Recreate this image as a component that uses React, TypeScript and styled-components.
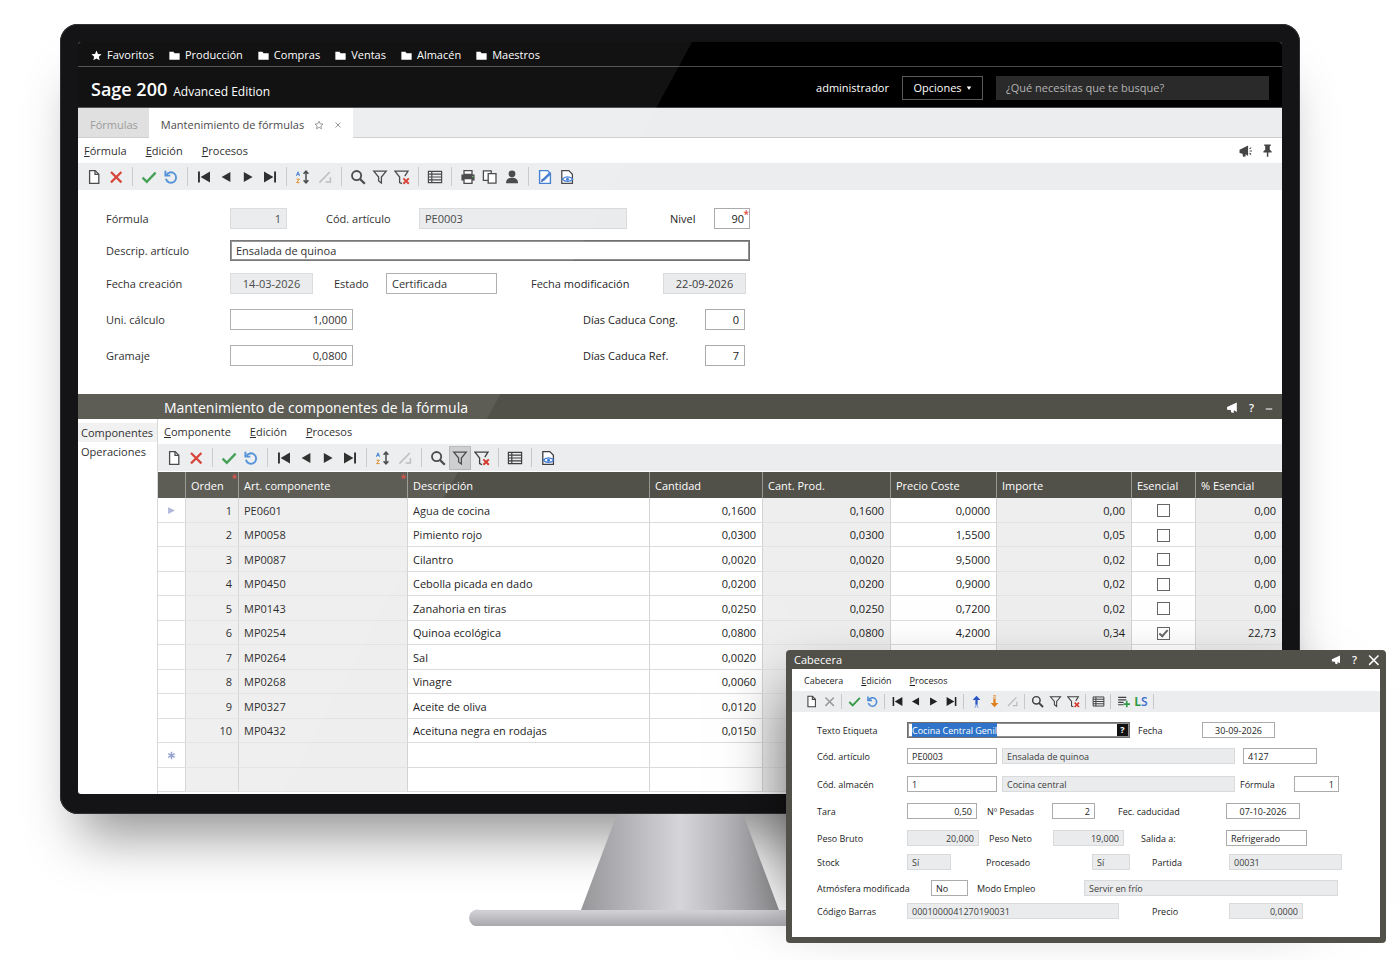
import React, { useEffect, useId, useRef } from "react";
import styled, { createGlobalStyle, css } from "styled-components";

const GlobalStyle = createGlobalStyle`
  *, *::before, *::after { box-sizing: border-box; }
  body {
    margin: 0;
    background: #fff;
    color: #1c1c1c;
    font-family: "Open Sans", "Noto Sans", sans-serif;
    font-size: 11px;
    line-height: 16px;
  }
  button, input {
    font: inherit;
    color: inherit;
  }
  button {
    padding: 0;
    border: 0;
    background: none;
    cursor: pointer;
  }
`;

/* ---------- icons ---------- */

const ink = "#3f3f41";
const red = "#d5382c";
const blue = "#3a78d0";

const funnel = "M1.8 2.2h12.4L9.4 8v6L6.6 12V8z";

const glyphs: Record<string, React.ReactNode> = {
  doc: (
    <g fill="#fff" stroke={ink} strokeWidth="1.3">
      <path d="M3.6 1.6h5.6l3.6 3.6v9.2H3.6z" />
      <path d="M9 1.6v3.8h3.8" fill="none" />
    </g>
  ),
  cross: <path d="M3 3l10.4 10.4M13.4 3L3 13.4" stroke={red} strokeWidth="2.2" fill="none" />,
  crossOff: <path d="M3 3l10.4 10.4M13.4 3L3 13.4" stroke="#9a9a9a" strokeWidth="1.9" fill="none" />,
  check: <path d="M1.6 8.6l4.2 4.2L14.6 3.6" stroke="#379a4a" strokeWidth="2.3" fill="none" />,
  undo: (
    <g fill="none" stroke="#4a8bd6" strokeWidth="1.9">
      <path d="M3.2 6.4a5.2 5.2 0 1 1-.3 3.4" />
      <path d="M2.4 1.8v4.8h4.9" />
    </g>
  ),
  first: <path d="M2 2.4h1.9v11.2H2zM14 2.6v10.8L4.6 8z" fill="#222" />,
  prev: <path d="M12.4 3v10L3.6 8z" fill="#222" />,
  next: <path d="M3.8 3v10l8.8-5z" fill="#222" />,
  last: <path d="M14 2.4h-1.9v11.2H14zM2 2.6v10.8L11.4 8z" fill="#222" />,
  sort: (
    <g>
      <path d="M1.4 6.8L3 2.8l1.6 4M2 5.6h2" fill="none" stroke={blue} strokeWidth="1" />
      <path d="M1.6 10.2h2.8l-2.8 3.4h3" fill="none" stroke="#e0861e" strokeWidth="1" />
      <path d="M11 3v10M8.6 4.8L11 2.2l2.4 2.6M8.6 11.2l2.4 2.6 2.4-2.6" fill="none" stroke={ink} strokeWidth="1.5" />
    </g>
  ),
  slope: <path d="M2.4 13.6L12.8 3M8.6 13h4.8V8.2" fill="none" stroke="#b9babb" strokeWidth="1.5" />,
  up: (
    <g>
      <path d="M8 .8l4.8 5.4H9.4V12H6.6V6.2H3.2z" fill="#2d55c4" />
      <path d="M6 15.8l2-4 2 4" fill="none" stroke="#6f93e0" strokeWidth="1.1" />
    </g>
  ),
  down: (
    <g>
      <path d="M8 15l4.8-5.2H9.4V5H6.6v4.8H3.2z" fill="#de7f1b" />
      <path d="M6.2.8h3.6l-3.6 3h3.8" fill="none" stroke="#e59b4a" strokeWidth="1.1" />
    </g>
  ),
  search: (
    <g fill="none" stroke={ink}>
      <circle cx="6.6" cy="6.6" r="4.6" strokeWidth="1.8" />
      <path d="M10 10l4.8 4.8" strokeWidth="2.3" />
    </g>
  ),
  filter: <path d={funnel} fill="none" stroke={ink} strokeWidth="1.3" />,
  filterOff: (
    <g fill="none">
      <path d="M10.8 7.2L14 2.2H.9L5.6 8v5.6l2.4 1" stroke={ink} strokeWidth="1.3" />
      <path d="M9.4 9.4l5.4 5.4M14.8 9.4l-5.4 5.4" stroke={red} strokeWidth="2" />
    </g>
  ),
  table: (
    <g fill="none" stroke={ink} strokeWidth="1.2">
      <path d="M1.4 2.4h13.2v11.2H1.4z" />
      <path d="M1.4 5.2h13.2M1.4 8h13.2M1.4 10.8h13.2M4.8 2.4v11.2" />
    </g>
  ),
  print: (
    <g>
      <path d="M1.4 5.4h13.2v6H1.4z" fill={ink} />
      <path d="M4 1.6h8v3.8H4z" fill="#fff" stroke={ink} strokeWidth="1.3" />
      <path d="M4 9.6h8v4.8H4z" fill="#fff" stroke={ink} strokeWidth="1.3" />
      <path d="M12 7h1.6v1.2H12z" fill="#56b456" />
    </g>
  ),
  copy: (
    <g fill="#fff" stroke={ink} strokeWidth="1.3">
      <path d="M1.4 1.8h7.8v9.6H1.4z" />
      <path d="M6.2 4.6h7.8v9.6H6.2z" />
    </g>
  ),
  user: (
    <g fill={ink}>
      <circle cx="8" cy="4.8" r="3.4" />
      <path d="M2 14.2c0-4 2.4-5.4 6-5.4s6 1.4 6 5.4z" />
    </g>
  ),
  edit: (
    <g fill="none" stroke={blue} strokeWidth="1.4">
      <path d="M2.6 1.6h8l2.8 2.8v10H2.6z" fill="#fff" />
      <path d="M5.8 11.4l7.2-7" strokeWidth="2.6" />
      <path d="M4.6 13l1-3" stroke="#2a4f96" />
    </g>
  ),
  preview: (
    <g fill="none">
      <path d="M2.8 1.6h7l3.6 3.6v9.2H2.8z" stroke={ink} strokeWidth="1.3" fill="#fff" />
      <path d="M3.4 10.2c2-3 8.2-3 10.2 0-2 3-8.2 3-10.2 0z" fill="#fff" stroke={blue} strokeWidth="1.3" />
      <circle cx="8.5" cy="10.2" r="1.5" fill={blue} />
    </g>
  ),
  listAdd: (
    <g fill="none">
      <path d="M1.4 3h10M1.4 6h10M1.4 9h6.6M1.4 12h6.6" stroke={ink} strokeWidth="1.4" />
      <path d="M12 7.2v8M8 11.2h8" stroke="#2f9b45" strokeWidth="2" />
    </g>
  ),
  horn: <path d="M14.4.6v12.6L10.6 11l-.4 3.6-3.4-.8-.4-3-5-.6V6.6z" fill="currentColor" />,
  hornLoud: (
    <g>
      <path d="M10.4 1.8v12l-3-2.2.2 2.8-3 .2-.6-3.6-3.4-.6V6.6z" fill="currentColor" />
      <path d="M12 5.6l1.8-1.4M12.2 8h2.6M12 10.6l1.8 1.4" stroke="currentColor" strokeWidth="1.3" />
    </g>
  ),
  pin: <path d="M4 .6h8v1.8h-1.2V7l2.2 2v1.6H9v5H7.2v-5H3V9l2.2-2V2.4H4z" fill="currentColor" />,
  star: <path d="M8 .8l2.2 4.9 5.2.5-4 3.5 1.2 5.3L8 12.3 3.4 15l1.2-5.3-4-3.5 5.2-.5z" fill="currentColor" />,
  starLine: (
    <path d="M8 1.8l1.9 4.3 4.5.4-3.4 3 1 4.6-4-2.4-4 2.4 1-4.6-3.4-3 4.5-.4z" fill="none" stroke="currentColor" strokeWidth="1.2" />
  ),
  folder: <path d="M.5 2.6h6l1.6 2.2h7.4V14H.5z" fill="currentColor" />,
  close: <path d="M1.5 2L14 14.5M14 2L1.5 14.5" fill="none" stroke="currentColor" strokeWidth="1.9" />,
  closeThin: <path d="M3 3l10 10M13 3L3 13" fill="none" stroke="currentColor" strokeWidth="1.6" />,
  minus: <path d="M1.5 10h13" stroke="currentColor" strokeWidth="2" />,
  caret: <path d="M2 4h12l-6 9z" fill="currentColor" />,
  row: <path d="M2 2l12 6-12 6z" fill="#aab2d8" />,
  newRow: <path d="M8 1.5v13M2.2 4.8l11.6 6.4M13.8 4.8L2.2 11.2" stroke="#8f9bcb" strokeWidth="2.6" />,
};

const Glyph = styled.svg`
  display: block;
  flex: none;
`;

const Icon = ({ name, size = 16 }: { name: string; size?: number }) => (
  <Glyph width={size} height={size} viewBox="0 0 16 16" aria-hidden="true">
    {glyphs[name]}
  </Glyph>
);

/* ---------- monitor ---------- */

const Stage = styled.main`
  position: relative;
  min-width: 1400px;
  min-height: 960px;
  padding: 24px 100px 0 60px;
  overflow: hidden;
`;

const Monitor = styled.div`
  position: relative;
  z-index: 1;
  padding: 18px 18px 20px;
  border-radius: 18px;
  background: #141416;
  box-shadow: inset 0 0 0 1px #303033, 0 42px 50px -20px rgba(0, 0, 0, 0.42);
`;

const Screen = styled.div`
  position: relative;
  overflow: hidden;
  border-radius: 3px;
  background: #fff;

  &::after {
    content: "";
    position: absolute;
    inset: 0;
    clip-path: polygon(0 0, 51% 0, 17% 100%, 0 100%);
    background: rgba(255, 255, 255, 0.07);
    pointer-events: none;
  }
`;

const StandArt = styled.svg`
  display: block;
  position: relative;
  margin: 0 auto;
  z-index: 1;
`;

const Stand = () => (
  <StandArt width="422" height="112" viewBox="0 0 422 112" aria-hidden="true">
    <defs>
      <linearGradient id="neck" x1="0" x2="1">
        <stop offset="0" stopColor="#97979a" />
        <stop offset="0.5" stopColor="#d5d5da" />
        <stop offset="1" stopColor="#919194" />
      </linearGradient>
      <linearGradient id="foot" x1="0" x2="0" y1="0" y2="1">
        <stop offset="0" stopColor="#d4d4d8" />
        <stop offset="1" stopColor="#a9a9ad" />
      </linearGradient>
    </defs>
    <path d="M148 0h126l36 96H112z" fill="url(#neck)" />
    <path d="M11 96h400a11 8 0 0 1 5 16H6a8 8 0 0 1 5-16z" fill="url(#foot)" />
  </StandArt>
);

/* ---------- application header ---------- */

const Favorites = styled.nav`
  display: flex;
  align-items: center;
  gap: 15px;
  height: 25px;
  padding: 2px 13px 0;
  border-bottom: 1px solid #4a4a4a;
  background: #000;
`;

const FavoriteLink = styled.a`
  display: flex;
  align-items: center;
  gap: 5px;
  color: #fff;
  text-decoration: none;
`;

const BrandBar = styled.header`
  display: flex;
  align-items: center;
  height: 41px;
  padding: 1px 13px 0;
  border-bottom: 1px solid #444;
  background: #000;
  color: #fff;
`;

const Brand = styled.h1`
  display: flex;
  align-items: baseline;
  gap: 6px;
  margin: 5px auto 0 0;
  font-size: 18px;
  font-weight: 600;
  line-height: 24px;
`;

const Edition = styled.span`
  font-size: 12px;
  font-weight: 400;
`;

const OptionsButton = styled.button`
  display: flex;
  align-items: center;
  justify-content: center;
  gap: 4px;
  width: 81px;
  height: 24px;
  margin: 0 13px;
  border: 1px solid #5a5a5a;
  color: #fff;
`;

const SearchBox = styled.input`
  width: 273px;
  height: 24px;
  padding: 0 10px;
  border: 0;
  background: #2a2a2a;
  color: #fff;

  &::placeholder { color: #b4b4b4; opacity: 1; }
`;

const TabStrip = styled.div`
  display: flex;
  height: 30px;
  border-bottom: 1px solid #cbcdce;
  background: #ebedee;
`;

const Tab = styled.div<{ $active?: boolean }>`
  display: flex;
  align-items: center;
  gap: 10px;
  height: ${(p) => (p.$active ? 30 : 29)}px;
  padding: 4px 11px 0 12px;
  background: ${(p) => (p.$active ? "#fff" : "#dedede")};
  color: ${(p) => (p.$active ? "#3c3c3c" : "#959595")};

  button { color: #777; }
  button:first-child { color: inherit; }
`;

/* ---------- menus and toolbars ---------- */

const MenuRow = styled.div<{ $compact?: boolean }>`
  display: flex;
  align-items: center;
  gap: ${(p) => (p.$compact ? 18 : 19)}px;
  height: ${(p) => (p.$compact ? 22 : 25)}px;
  padding: ${(p) => (p.$compact ? "1px 12px 0" : "0 8px 0 6px")};
  font-size: ${(p) => (p.$compact ? 9 : 11)}px;
`;

const MenuEnd = styled.div`
  display: flex;
  gap: 8px;
  margin-left: auto;
  color: #444;
`;

const Menu = ({ items, compact, children }: { items: string[]; compact?: boolean; children?: React.ReactNode }) => (
  <MenuRow $compact={compact}>
    {items.map((item) => (
      <button type="button" key={item}>
        {item === "Cabecera" ? item : <><u>{item[0]}</u>{item.slice(1)}</>}
      </button>
    ))}
    {children}
  </MenuRow>
);

const ToolbarRow = styled.div<{ $compact?: boolean }>`
  display: flex;
  align-items: center;
  height: ${(p) => (p.$compact ? 21 : 27)}px;
  padding-left: ${(p) => (p.$compact ? 10 : 5)}px;
  background: #ebedee;
`;

const ToolButton = styled.button<{ $compact?: boolean; $pressed?: boolean }>`
  display: flex;
  align-items: center;
  justify-content: center;
  width: ${(p) => (p.$compact ? 18 : 22)}px;
  height: ${(p) => (p.$compact ? 20 : 24)}px;
  ${(p) => p.$pressed && css`
    background: #cbcccd;
    box-shadow: inset 0 0 0 1px #b4b5b6;
  `}
`;

const Divider = styled.span<{ $compact?: boolean }>`
  width: 1px;
  height: ${(p) => (p.$compact ? 15 : 19)}px;
  margin: 0 ${(p) => (p.$compact ? 3 : 5)}px;
  background: #c6c8c9;
`;

const LabelGlyph = styled.span`
  color: #3b6fd0;
  font-size: 12px;
  font-weight: 600;
  line-height: 14px;

  b { color: #2f9b45; font-weight: 700; }
`;

const toolNames: Record<string, string> = {
  doc: "Nuevo", cross: "Eliminar", crossOff: "Eliminar", check: "Guardar", undo: "Deshacer",
  first: "Primero", prev: "Anterior", next: "Siguiente", last: "Último", sort: "Ordenar",
  slope: "Quitar orden", up: "Orden ascendente", down: "Orden descendente", search: "Buscar",
  filter: "Filtrar", filterOff: "Quitar filtro", table: "Ver tabla", print: "Imprimir",
  copy: "Copiar", user: "Usuario", edit: "Editar", preview: "Vista previa",
  listAdd: "Añadir línea", ls: "Lote y serie",
};

const Toolbar = ({ groups, pressed, compact }: { groups: string[]; pressed?: string; compact?: boolean }) => (
  <ToolbarRow $compact={compact} role="toolbar">
    {groups.map((group, i) => (
      <React.Fragment key={group}>
        {i > 0 && <Divider $compact={compact} />}
        {group.split(" ").filter(Boolean).map((tool) => (
          <ToolButton key={tool} type="button" aria-label={toolNames[tool]} $compact={compact} $pressed={tool === pressed}>
            {tool === "ls" ? <LabelGlyph><b>L</b>S</LabelGlyph> : <Icon name={tool} size={compact ? 13 : 16} />}
          </ToolButton>
        ))}
      </React.Fragment>
    ))}
  </ToolbarRow>
);

/* ---------- forms ---------- */

const FormulaForm = styled.form`
  min-height: 204px;
  padding: 18px 28px 0;
`;

const LabelForm = styled.form`
  height: 225px;
  padding: 10px 25px 0;
  font-size: 9px;
`;

const FormRow = styled.div<{ $cols: string; $below?: number }>`
  display: grid;
  grid-template-columns: ${(p) => p.$cols};
  align-items: center;
  margin-bottom: ${(p) => p.$below ?? 0}px;
`;

const FieldLabel = styled.label`
  white-space: nowrap;

  ${LabelForm} & { height: 16px; line-height: 18px; }
`;

type Align = "left" | "center" | "right";

const FieldInput = styled.input<{ $align?: Align; $strong?: boolean }>`
  display: block;
  width: 100%;
  height: 21px;
  padding: 0 5px;
  border: 1px solid #ababab;
  ${(p) => p.$strong && "box-shadow: inset 0 0 0 1px #8f8f8f; border-color: #6f6f6f;"}
  outline: none;
  background: #fff;
  text-align: ${(p) => p.$align ?? "left"};

  &:read-only {
    border-color: #d9dadb;
    background: #e9ebec;
    color: #3c3c3c;
  }
  &::selection { background: #2f74c9; color: #fff; }

  ${LabelForm} & { height: 16px; padding: 1px 4px 0; }
`;

const FieldWrap = styled.div`
  position: relative;
`;

const RequiredMark = styled.span`
  position: absolute;
  top: 1px;
  right: 1px;
  color: #e04a40;
  font-size: 10px;
  font-weight: 600;
  line-height: 10px;
`;

const LookupButton = styled.button`
  position: absolute;
  top: 2px;
  right: 2px;
  width: 11px;
  height: 12px;
  background: #111;
  color: #fff;
  font-size: 9px;
  font-weight: 700;
  line-height: 12px;
`;

interface FieldProps {
  label?: string;
  name?: string;
  value: string;
  align?: Align;
  locked?: boolean;
  strong?: boolean;
  required?: boolean;
  lookup?: boolean;
}

/* Yields two grid cells (label, input) or only the input when there is no visible label. */
const Field = ({ label, name, value, align, locked, strong, required, lookup }: FieldProps) => {
  const id = useId();
  const input = useRef<HTMLInputElement>(null);
  useEffect(() => {
    if (lookup && input.current) {
      input.current.focus();
      input.current.select();
    }
  }, [lookup]);
  return (
    <>
      {label && <FieldLabel htmlFor={id}>{label}</FieldLabel>}
      <FieldWrap>
        <FieldInput ref={input} id={id} aria-label={name} defaultValue={value} readOnly={locked} $align={align} $strong={strong} />
        {required && <RequiredMark>*</RequiredMark>}
        {lookup && <LookupButton type="button" aria-label="Buscar etiqueta">?</LookupButton>}
      </FieldWrap>
    </>
  );
};

/* ---------- components section ---------- */

const SectionHeader = styled.header`
  display: flex;
  align-items: center;
  height: 25px;
  padding: 2px 9px 0 86px;
  background: #51514a;
  color: #fff;
`;

const SectionTitle = styled.h2`
  margin: 0 auto 0 0;
  font-size: 14px;
  font-weight: 400;
  line-height: 21px;
`;

const HeaderActions = styled.div`
  display: flex;
  align-items: center;
  gap: 11px;
  color: #fff;
`;

const SectionBody = styled.div`
  display: flex;
`;

const SideNav = styled.nav`
  display: flex;
  flex-direction: column;
  width: 80px;
  padding-top: 4px;
  border-right: 1px solid #d4d5d6;
`;

const SideLink = styled.a<{ $active?: boolean }>`
  height: 19px;
  padding-left: 3px;
  background: ${(p) => (p.$active ? "#f0f0f0" : "transparent")};
  color: inherit;
  line-height: 19px;
  text-decoration: none;
`;

const SectionMain = styled.div`
  flex: 1;
  min-width: 0;
  padding-bottom: 2px;
`;

const ComponentsTable = styled.table`
  width: 100%;
  margin-top: 1px;
  border-collapse: separate;
  border-spacing: 0;
  table-layout: fixed;
`;

const HeadCell = styled.th`
  position: relative;
  height: 26px;
  padding: 2px 5px 0;
  border-left: 1px solid #96968f;
  background: #51514a;
  color: #fff;
  font-weight: 400;
  text-align: left;
  white-space: nowrap;

  &:first-child { border-left: 0; }
`;

const BodyRow = styled.tr`
  height: 24px;
  &:nth-child(odd) { height: 25px; }
`;

const Cell = styled.td<{ $shaded?: boolean; $align?: Align }>`
  padding: 1px 6px 0 5px;
  border-bottom: 1px solid ${(p) => (p.$shaded ? "#e3e3e3" : "#dcdcdc")};
  border-left: 1px solid #d3d3d3;
  background: ${(p) => (p.$shaded ? "#eee" : "#fff")};
  text-align: ${(p) => p.$align ?? "left"};
  white-space: nowrap;

  &:first-child { border-left: 0; }
  & > svg { margin: 0 auto; }
`;

const TickBox = styled.input`
  display: block;
  position: relative;
  width: 13px;
  height: 13px;
  margin: 0 auto;
  border: 1px solid #666;
  background: #fff;
  appearance: none;

  &:checked::after {
    content: "";
    position: absolute;
    top: 0;
    left: 3px;
    width: 5px;
    height: 9px;
    border: solid #666;
    border-width: 0 2px 2px 0;
    transform: rotate(42deg);
  }
`;

interface Component {
  code: string;
  text: string;
  qty: string;
  cost: string;
  amount: string;
  percent: string;
  essential?: boolean;
}

const components: Component[] = [
  { code: "PE0601", text: "Agua de cocina", qty: "0,1600", cost: "0,0000", amount: "0,00", percent: "0,00" },
  { code: "MP0058", text: "Pimiento rojo", qty: "0,0300", cost: "1,5500", amount: "0,05", percent: "0,00" },
  { code: "MP0087", text: "Cilantro", qty: "0,0020", cost: "9,5000", amount: "0,02", percent: "0,00" },
  { code: "MP0450", text: "Cebolla picada en dado", qty: "0,0200", cost: "0,9000", amount: "0,02", percent: "0,00" },
  { code: "MP0143", text: "Zanahoria en tiras", qty: "0,0250", cost: "0,7200", amount: "0,02", percent: "0,00" },
  { code: "MP0254", text: "Quinoa ecológica", qty: "0,0800", cost: "4,2000", amount: "0,34", percent: "22,73", essential: true },
  { code: "MP0264", text: "Sal", qty: "0,0020", cost: "", amount: "", percent: "" },
  { code: "MP0268", text: "Vinagre", qty: "0,0060", cost: "", amount: "", percent: "" },
  { code: "MP0327", text: "Aceite de oliva", qty: "0,0120", cost: "", amount: "", percent: "" },
  { code: "MP0432", text: "Aceituna negra en rodajas", qty: "0,0150", cost: "", amount: "", percent: "" },
];

const columns = [
  { title: "", width: 27 },
  { title: "Orden", width: 53, required: true },
  { title: "Art. componente", width: 169, required: true },
  { title: "Descripción", width: 242 },
  { title: "Cantidad", width: 113 },
  { title: "Cant. Prod.", width: 128 },
  { title: "Precio Coste", width: 106 },
  { title: "Importe", width: 135 },
  { title: "Esencial", width: 64 },
  { title: "% Esencial", width: 87 },
];

const BlankRow = ({ marker }: { marker?: boolean }) => (
  <BodyRow>
    {columns.map((c, i) => (
      <Cell key={c.title} $shaded={[1, 2, 5, 7, 9].includes(i)}>
        {i === 0 && marker && <Icon name="newRow" size={9} />}
      </Cell>
    ))}
  </BodyRow>
);

const Components = () => (
  <ComponentsTable>
    <colgroup>
      {columns.map((c) => <col key={c.title} width={c.width} />)}
    </colgroup>
    <thead>
      <tr>
        {columns.map((c) => (
          <HeadCell key={c.title} scope="col">
            {c.title}
            {c.required && <RequiredMark>*</RequiredMark>}
          </HeadCell>
        ))}
      </tr>
    </thead>
    <tbody>
      {components.map((row, i) => (
        <BodyRow key={row.code}>
          <Cell>{i === 0 && <Icon name="row" size={9} />}</Cell>
          <Cell $shaded $align="right">{i + 1}</Cell>
          <Cell $shaded>{row.code}</Cell>
          <Cell>{row.text}</Cell>
          <Cell $align="right">{row.qty}</Cell>
          <Cell $shaded $align="right">{row.cost && row.qty}</Cell>
          <Cell $align="right">{row.cost}</Cell>
          <Cell $shaded $align="right">{row.amount}</Cell>
          <Cell>
            {row.cost && <TickBox type="checkbox" aria-label={`Esencial: ${row.text}`} defaultChecked={row.essential} />}
          </Cell>
          <Cell $shaded $align="right">{row.percent}</Cell>
        </BodyRow>
      ))}
      <BlankRow marker />
      <BlankRow />
    </tbody>
  </ComponentsTable>
);

/* ---------- label dialog ---------- */

const Dialog = styled.section`
  position: absolute;
  z-index: 2;
  top: 650px;
  right: 14px;
  width: 600px;
  padding: 0 6px 6px;
  border-radius: 4px;
  background: #51514a;
  box-shadow: -36px 0 60px -40px rgba(0, 0, 0, 0.6);
`;

const DialogHeader = styled.header`
  display: flex;
  align-items: center;
  justify-content: space-between;
  height: 19px;
  padding: 0 0 0 2px;
  color: #fff;
`;

const DialogTitle = styled.h2`
  margin: 0;
  font-size: 11px;
  font-weight: 400;
  line-height: 16px;
`;

const HelpButton = styled.button`
  font-size: 11px;
  font-weight: 600;
  line-height: 14px;
`;

const DialogBody = styled.div`
  background: #fff;
`;

const LabelDialog = () => (
  <Dialog role="dialog" aria-label="Cabecera">
    <DialogHeader>
      <DialogTitle>Cabecera</DialogTitle>
      <HeaderActions>
        <button type="button" aria-label="Avisos"><Icon name="horn" size={10} /></button>
        <HelpButton type="button" aria-label="Ayuda">?</HelpButton>
        <button type="button" aria-label="Cerrar"><Icon name="close" size={12} /></button>
      </HeaderActions>
    </DialogHeader>
    <DialogBody>
      <Menu compact items={["Cabecera", "Edición", "Procesos"]} />
      <Toolbar
        compact
        groups={["doc crossOff", "check undo", "first prev next last", "up down slope", "search filter filterOff", "table", "listAdd ls", ""]}
      />
      <LabelForm>
        <FormRow $cols="90px 223px 8px 64px 73px" $below={10}>
          <Field label="Texto Etiqueta" value="Cocina Central Genil" strong lookup />
          <span />
          <Field label="Fecha" value="30-09-2026" align="center" />
        </FormRow>
        <FormRow $cols="90px 90px 5px 233px 8px 74px" $below={12}>
          <Field label="Cód. artículo" value="PE0003" />
          <span />
          <Field name="Artículo" value="Ensalada de quinoa" locked />
          <span />
          <Field name="Número" value="4127" />
        </FormRow>
        <FormRow $cols="90px 90px 5px 233px 5px 54px 45px" $below={11}>
          <Field label="Cód. almacén" value="1" />
          <span />
          <Field name="Almacén" value="Cocina central" locked />
          <span />
          <Field label="Fórmula" value="1" align="right" />
        </FormRow>
        <FormRow $cols="90px 70px 10px 65px 43px 23px 108px 74px" $below={11}>
          <Field label="Tara" value="0,50" align="right" />
          <span />
          <Field label="Nº Pesadas" value="2" align="right" />
          <span />
          <Field label="Fec. caducidad" value="07-10-2026" align="center" />
        </FormRow>
        <FormRow $cols="90px 72px 10px 64px 71px 17px 85px 81px" $below={8}>
          <Field label="Peso Bruto" value="20,000" align="right" locked />
          <span />
          <Field label="Peso Neto" value="19,000" align="right" locked />
          <span />
          <Field label="Salida a:" value="Refrigerado" />
        </FormRow>
        <FormRow $cols="90px 44px 35px 106px 38px 22px 77px 113px" $below={10}>
          <Field label="Stock" value="Sí" locked />
          <span />
          <Field label="Procesado" value="Sí" locked />
          <span />
          <Field label="Partida" value="00031" locked />
        </FormRow>
        <FormRow $cols="114px 37px 9px 107px 254px" $below={7}>
          <Field label="Atmósfera modificada" value="No" />
          <span />
          <Field label="Modo Empleo" value="Servir en frío" locked />
        </FormRow>
        <FormRow $cols="90px 212px 33px 77px 74px">
          <Field label="Código Barras" value="0001000041270190031" locked />
          <span />
          <Field label="Precio" value="0,0000" align="right" locked />
        </FormRow>
      </LabelForm>
    </DialogBody>
  </Dialog>
);

/* ---------- page ---------- */

const favorites = ["Favoritos", "Producción", "Compras", "Ventas", "Almacén", "Maestros"];

export default function App() {
  return (
    <>
      <GlobalStyle />
      <Stage>
        <Monitor>
          <Screen>
            <Favorites>
              {favorites.map((item, i) => (
                <FavoriteLink key={item} href="#">
                  <Icon name={i === 0 ? "star" : "folder"} size={11} />
                  {item}
                </FavoriteLink>
              ))}
            </Favorites>
            <BrandBar>
              <Brand>
                Sage 200 <Edition>Advanced Edition</Edition>
              </Brand>
              <span>administrador</span>
              <OptionsButton type="button">
                Opciones <Icon name="caret" size={6} />
              </OptionsButton>
              <SearchBox type="search" aria-label="Buscar" placeholder="¿Qué necesitas que te busque?" />
            </BrandBar>
            <TabStrip>
              <Tab><button type="button">Fórmulas</button></Tab>
              <Tab $active>
                <button type="button">Mantenimiento de fórmulas</button>
                <button type="button" aria-label="Añadir a favoritos"><Icon name="starLine" size={10} /></button>
                <button type="button" aria-label="Cerrar pestaña"><Icon name="closeThin" size={8} /></button>
              </Tab>
            </TabStrip>
            <Menu items={["Fórmula", "Edición", "Procesos"]}>
              <MenuEnd>
                <button type="button" aria-label="Avisos"><Icon name="hornLoud" size={14} /></button>
                <button type="button" aria-label="Fijar"><Icon name="pin" size={13} /></button>
              </MenuEnd>
            </Menu>
            <Toolbar
              groups={["doc cross", "check undo", "first prev next last", "sort slope", "search filter filterOff", "table", "print copy user", "edit preview"]}
            />
            <FormulaForm>
              <FormRow $cols="124px 57px 39px 93px 208px 43px 44px 36px" $below={11}>
                <Field label="Fórmula" value="1" align="right" locked />
                <span />
                <Field label="Cód. artículo" value="PE0003" locked />
                <span />
                <Field label="Nivel" value="90" align="right" required />
              </FormRow>
              <FormRow $cols="124px 520px" $below={12}>
                <Field label="Descrip. artículo" value="Ensalada de quinoa" strong />
              </FormRow>
              <FormRow $cols="124px 83px 21px 52px 111px 34px 132px 83px" $below={15}>
                <Field label="Fecha creación" value="14-03-2026" align="center" locked />
                <span />
                <Field label="Estado" value="Certificada" />
                <span />
                <Field label="Fecha modificación" value="22-09-2026" align="center" locked />
              </FormRow>
              <FormRow $cols="124px 123px 230px 122px 40px" $below={15}>
                <Field label="Uni. cálculo" value="1,0000" align="right" />
                <span />
                <Field label="Días Caduca Cong." value="0" align="right" />
              </FormRow>
              <FormRow $cols="124px 123px 230px 122px 40px">
                <Field label="Gramaje" value="0,0800" align="right" />
                <span />
                <Field label="Días Caduca Ref." value="7" align="right" />
              </FormRow>
            </FormulaForm>
            <SectionHeader>
              <SectionTitle>Mantenimiento de componentes de la fórmula</SectionTitle>
              <HeaderActions>
                <button type="button" aria-label="Avisos"><Icon name="horn" size={12} /></button>
                <HelpButton type="button" aria-label="Ayuda">?</HelpButton>
                <button type="button" aria-label="Minimizar"><Icon name="minus" size={8} /></button>
              </HeaderActions>
            </SectionHeader>
            <SectionBody>
              <SideNav>
                <SideLink href="#" $active>Componentes</SideLink>
                <SideLink href="#">Operaciones</SideLink>
              </SideNav>
              <SectionMain>
                <Menu items={["Componente", "Edición", "Procesos"]} />
                <Toolbar
                  pressed="filter"
                  groups={["doc cross", "check undo", "first prev next last", "sort slope", "search filter filterOff", "table", "preview"]}
                />
                <Components />
              </SectionMain>
            </SectionBody>
          </Screen>
        </Monitor>
        <Stand />
        <LabelDialog />
      </Stage>
    </>
  );
}
